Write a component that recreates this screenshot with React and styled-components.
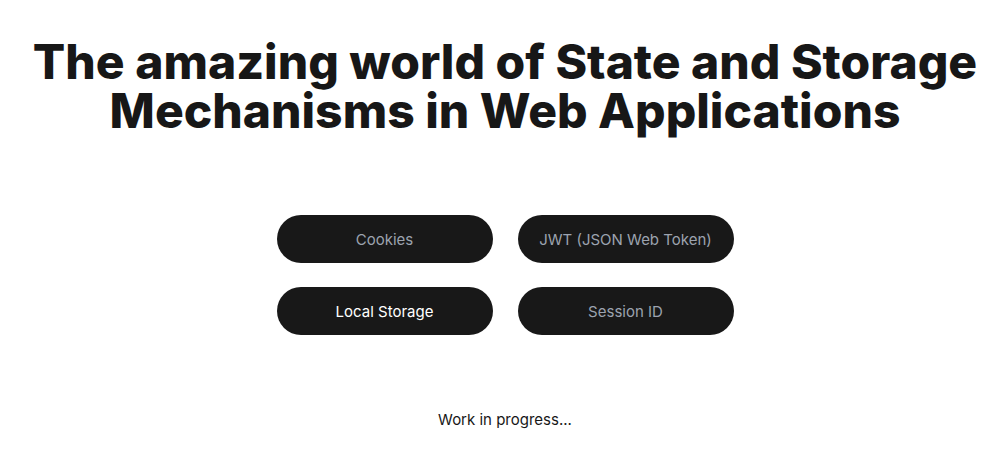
import React, { useState } from 'react';
import styled, { createGlobalStyle } from 'styled-components';

const GlobalStyle = createGlobalStyle`
  body {
    margin: 0;
    background: #ffffff;
    font-family: Inter, "Liberation Sans", sans-serif;
    color: #171717;
  }
`;

const Page = styled.main`
  width: 100%;
  min-height: 452px;
  box-sizing: border-box;
  padding-left: 4px;
  display: flex;
  flex-direction: column;
  align-items: center;
`;

const Title = styled.h1`
  margin: 37px 0 0;
  font-size: 48px;
  line-height: 49px;
  font-weight: 800;
  text-align: center;
  color: #171717;
`;

const Grid = styled.div`
  margin-top: 80px;
  display: grid;
  grid-template-columns: repeat(2, 216px);
  column-gap: 25px;
  row-gap: 24px;
`;

const Pill = styled.button`
  height: 48px;
  border: none;
  border-radius: 24px;
  background: #181818;
  color: ${(p) => (p.$active ? '#ffffff' : '#9ca3af')};
  font-family: Inter, "Liberation Sans", sans-serif;
  font-size: 15px;
  cursor: pointer;
`;

const Footer = styled.p`
  margin: 75px 0 0;
  font-size: 15px;
  color: #171717;
`;

const items = ['Cookies', 'JWT (JSON Web Token)', 'Local Storage', 'Session ID'];

export default function App() {
  const [active, setActive] = useState('Local Storage');
  return (
    <Page>
      <GlobalStyle />
      <Title>
        The amazing world of State and Storage
        <br />
        Mechanisms in Web Applications
      </Title>
      <Grid>
        {items.map((name) => (
          <Pill key={name} $active={active === name} onClick={() => setActive(name)}>
            {name}
          </Pill>
        ))}
      </Grid>
      <Footer>Work in progress...</Footer>
    </Page>
  );
}
